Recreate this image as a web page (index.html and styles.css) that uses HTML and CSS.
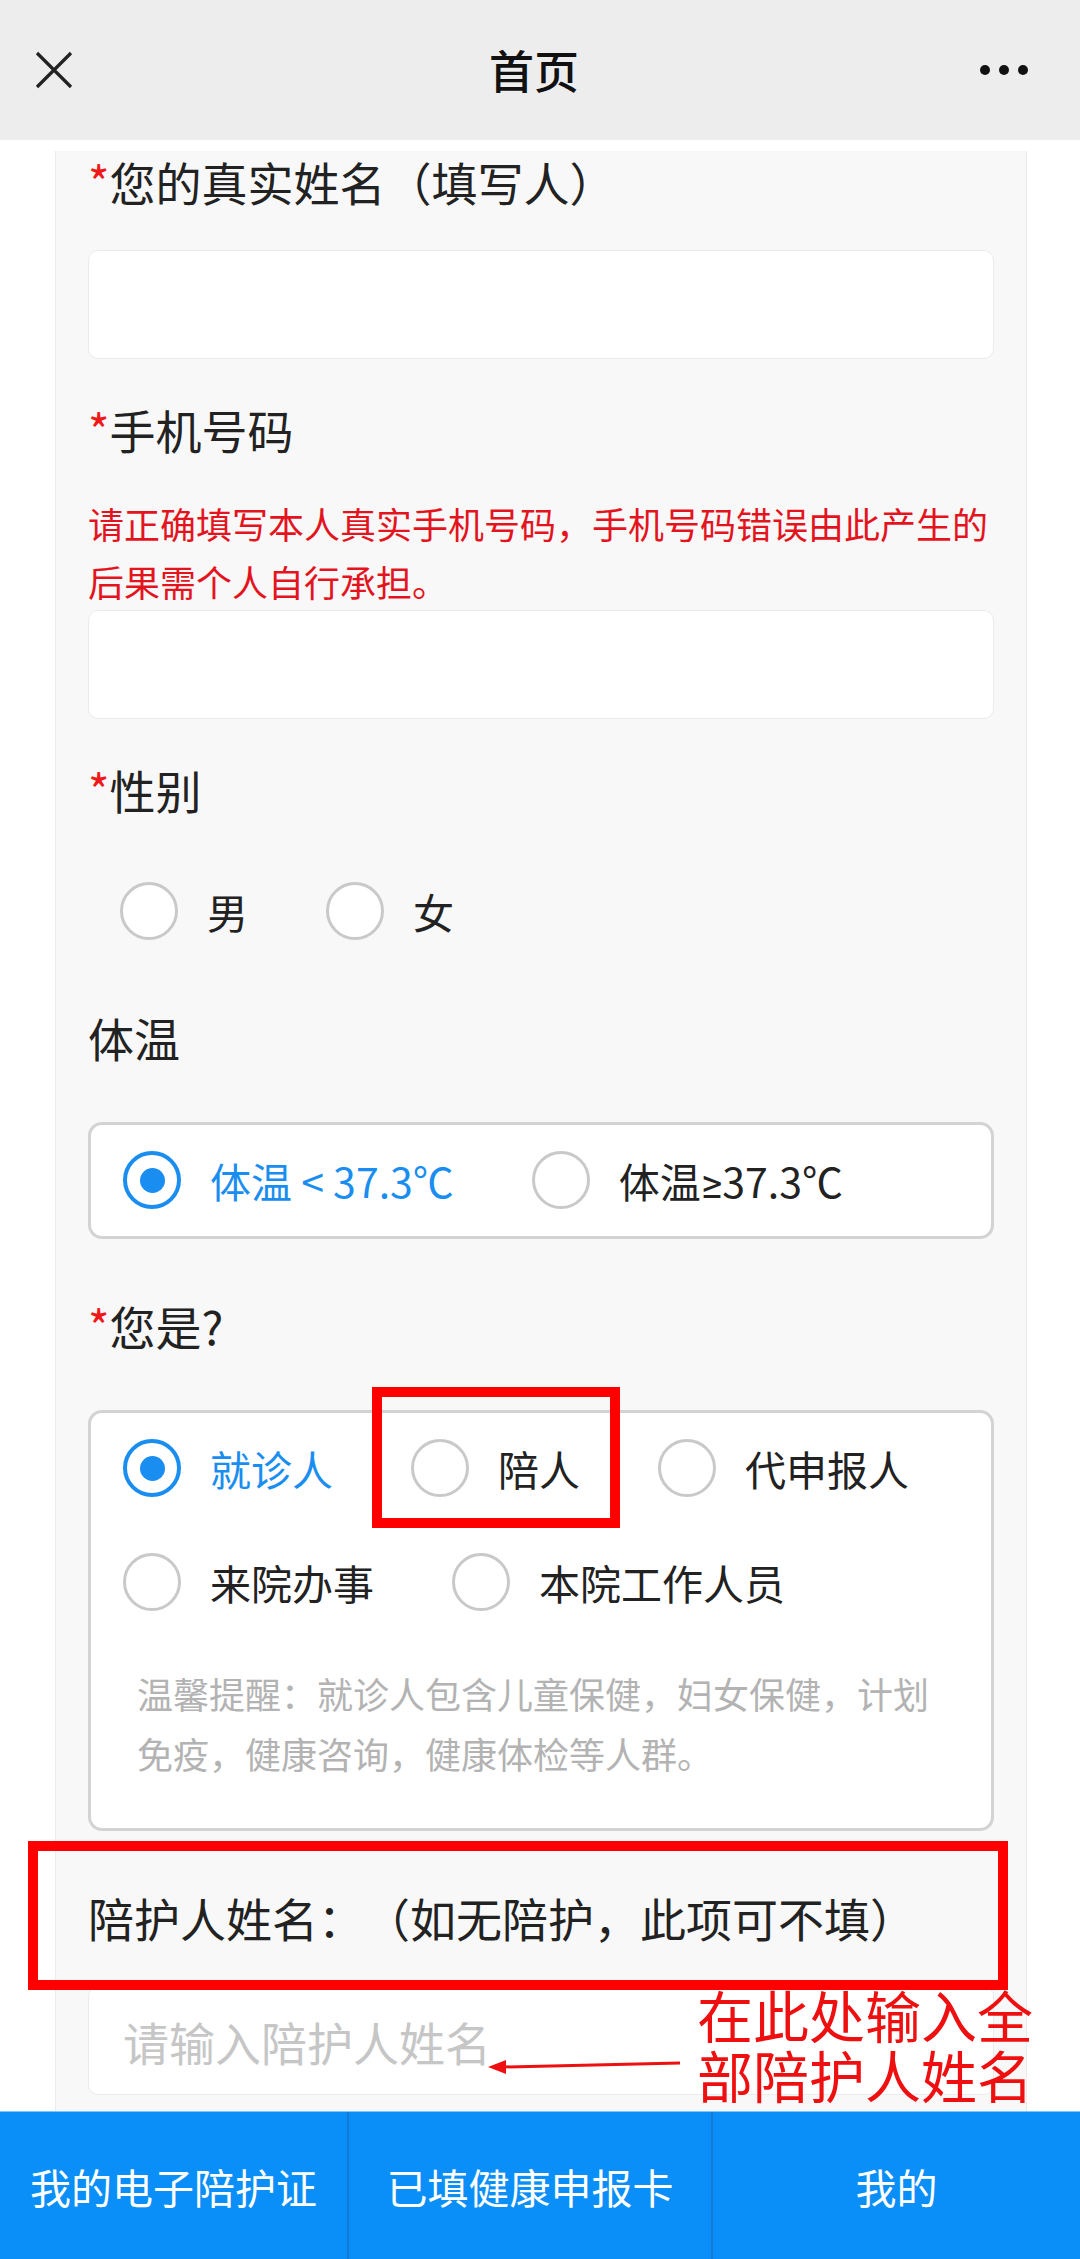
FILE: index.html
```html
<!DOCTYPE html>
<html lang="zh-CN">
<head>
<meta charset="utf-8">
<title>首页</title>
<link rel="stylesheet" href="styles.css">
</head>
<body>
<div class="page">
  <header class="topbar">
    <div class="tb-left">
      <svg class="close-icon" viewBox="0 0 38 38" width="38" height="38"><path d="M2 2 L36 36 M36 2 L2 36" stroke="#222" stroke-width="3.2" stroke-linecap="butt" fill="none"/></svg>
    </div>
    <div class="tb-title">首页</div>
    <div class="tb-right"><span class="dot"></span><span class="dot"></span><span class="dot"></span></div>
  </header>

  <main class="main">
    <div class="panel">
      <div class="label first"><span class="req">*</span>您的真实姓名（填写人）</div>
      <input class="input" type="text">

      <div class="label"><span class="req">*</span>手机号码</div>
      <p class="note">请正确填写本人真实手机号码，手机号码错误由此产生的后果需个人自行承担。</p>
      <input class="input flush" type="text">

      <div class="label"><span class="req">*</span>性别</div>
      <div class="choices plain">
        <span class="opt"><span class="radio"></span><span class="txt">男</span></span>
        <span class="opt"><span class="radio"></span><span class="txt">女</span></span>
      </div>

      <div class="label after-box">体温</div>
      <div class="box">
        <div class="choices">
          <span class="opt on"><span class="radio checked"></span><span class="txt">体温 &lt; 37.3℃</span></span>
          <span class="opt"><span class="radio"></span><span class="txt">体温<span class="sym">≥</span>37.3℃</span></span>
        </div>
      </div>

      <div class="label after-box"><span class="req">*</span>您是?</div>
      <div class="box who">
        <div class="choices">
          <span class="opt on"><span class="radio checked"></span><span class="txt">就诊人</span></span>
          <span class="opt"><span class="radio"></span><span class="txt">陪人</span></span>
          <span class="opt"><span class="radio"></span><span class="txt">代申报人</span></span>
          <span class="opt"><span class="radio"></span><span class="txt">来院办事</span></span>
          <span class="opt"><span class="radio"></span><span class="txt">本院工作人员</span></span>
        </div>
        <p class="hint">温馨提醒：就诊人包含儿童保健，妇女保健，计划免疫，健康咨询，健康体检等人群。</p>
      </div>

      <div class="label after-box">陪护人姓名：（如无陪护，此项可不填）</div>
      <input class="input" type="text" placeholder="请输入陪护人姓名">
    </div>
  </main>

  <nav class="tabbar">
    <div class="tab">我的电子陪护证</div>
    <div class="tab">已填健康申报卡</div>
    <div class="tab">我的</div>
  </nav>

  <div class="mark mark-1"></div>
  <div class="mark mark-2"></div>
  <div class="annot">在此处输入全<br>部陪护人姓名</div>
  <svg class="arrow" viewBox="0 0 200 18" width="200" height="18">
    <path d="M196 5 L20 9" stroke="#ee1010" stroke-width="3" fill="none"/>
    <polygon points="4,9 22,2 22,16" fill="#ee1010"/>
  </svg>
</div>
</body>
</html>
```

FILE: styles.css
```css
* { box-sizing: border-box; }

html, body {
  margin: 0;
  padding: 0;
  background: #ffffff;
}

body {
  font-family: "Noto Sans CJK SC", "Noto Sans", sans-serif;
  color: #222;
  text-spacing-trim: space-all;
}

.page {
  position: relative;
  width: 1080px;
  height: 2259px;
  overflow: hidden;
  display: flex;
  flex-direction: column;
}

/* top bar */
.topbar {
  height: 140px;
  flex: none;
  background: #ededed;
  display: grid;
  grid-template-columns: 1fr auto 1fr;
  align-items: center;
}

.tb-left {
  padding-left: 35px;
  display: flex;
  align-items: center;
}

.close-icon { display: block; }

.tb-title {
  font-size: 45px;
  font-weight: 500;
  color: #111;
  line-height: 60px;
  margin-right: 12px;
}

.tb-right {
  display: flex;
  justify-content: flex-end;
  align-items: center;
  gap: 9px;
  padding-right: 52px;
}

.dot {
  width: 10px;
  height: 10px;
  border-radius: 50%;
  background: #111;
}

/* main */
.main {
  flex: 1;
  overflow: hidden;
  padding: 0 53px 0 55px;
}

.panel {
  height: 100%;
  background: #f8f8f8;
  border-left: 1px solid #ececec;
  border-right: 1px solid #ececec;
  padding: 0 32px;
}

.label {
  font-size: 46px;
  line-height: 60px;
  margin-top: 40px;
  color: #222;
  white-space: nowrap;
}

.label.first { margin-top: 11px; }
.label.after-box { margin-top: 56px; }

.req { color: #f01818; }

.input {
  display: block;
  width: 100%;
  height: 109px;
  margin-top: 39px;
  border: 1px solid #ebebeb;
  border-radius: 10px;
  background: #fff;
  padding: 0 0 0 34px;
  font-family: inherit;
  font-size: 46px;
  color: #222;
  outline: none;
}

.input.flush { margin-top: 0; }

.input::placeholder { color: #c6c6c6; }

.note {
  margin: 35px 0 0;
  font-size: 36px;
  line-height: 58px;
  color: #e4141e;
}

/* radios */
.choices {
  display: flex;
  flex-wrap: wrap;
  column-gap: 78px;
  row-gap: 56px;
}

.choices.plain {
  margin-top: 52px;
  height: 80px;
  align-items: center;
  padding-left: 32px;
}

.opt {
  display: inline-flex;
  align-items: center;
  gap: 29px;
  height: 58px;
  font-size: 41px;
  line-height: 58px;
  color: #222;
  white-space: nowrap;
}

.txt {
  display: block;
  height: 58px;
  line-height: 58px;
}

.opt.on { color: #1a8ef0; }

.sym {
  font-family: "Roboto", "DejaVu Sans", sans-serif;
  line-height: 0;
}

.radio {
  position: relative;
  width: 58px;
  height: 58px;
  flex: none;
  border-radius: 50%;
  border: 3px solid #c9c9c9;
  background: #fff;
}

.radio.checked {
  border: 4px solid #1a8ef0;
}

.radio.checked::after {
  content: "";
  position: absolute;
  left: 50%;
  top: 50%;
  width: 25px;
  height: 25px;
  margin: -12.5px 0 0 -12.5px;
  border-radius: 50%;
  background: #1a8ef0;
}

.box {
  margin-top: 55px;
  background: #fff;
  border: 3px solid #d3d3d3;
  border-radius: 14px;
  padding: 26px 32px 27px;
}

.box.who {
  padding-bottom: 45px;
}

.hint {
  margin: 52px 0 0 14px;
  font-size: 36px;
  line-height: 60px;
  color: #b3b3b3;
}

/* tab bar */
.tabbar {
  flex: none;
  height: 148px;
  background: #0a8ef8;
  border-top: 1px solid #7cc6ff;
  display: grid;
  grid-template-columns: 347px 364px 1fr;
}

.tab {
  display: flex;
  align-items: center;
  justify-content: center;
  color: #fff;
  font-size: 41px;
  white-space: nowrap;
}

.tab + .tab { border-left: 2px solid rgba(40, 90, 150, 0.35); }

/* annotations overlaid on the screenshot */
.mark {
  position: absolute;
  border: 10px solid #ff0000;
}

.mark-1 {
  left: 372px;
  top: 1387px;
  width: 248px;
  height: 141px;
}

.mark-2 {
  left: 28px;
  top: 1841px;
  width: 980px;
  height: 149px;
}

.annot {
  position: absolute;
  left: 697px;
  top: 1984px;
  font-size: 56px;
  line-height: 60px;
  color: #ee1010;
  white-space: nowrap;
}

.arrow {
  position: absolute;
  left: 484px;
  top: 2058px;
}
```
